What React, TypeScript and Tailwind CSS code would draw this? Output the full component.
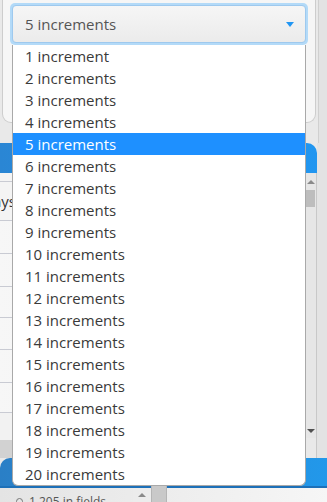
import React from "react";

const items = Array.from({ length: 20 }, (_, i) =>
  i === 0 ? "1 increment" : `${i + 1} increments`
);

export default function App() {
  const font = { fontFamily: '"Open Sans", "Noto Sans", sans-serif' };
  return (
    <div
      className="relative w-[327px] h-[502px] overflow-hidden bg-[#e9e9e9] flex flex-col"
      style={font}
    >
      {/* top panel row */}
      <div className="flex h-[143px] shrink-0">
        <div className="ml-[2px] w-[314px] h-[123px] bg-[#f6f6f6] border border-t-0 border-[#cdcdcd] rounded-b-[9px]" />
        <div className="flex-1 ml-[2px] bg-[#e3e3e3] border-l border-[#d0d0d0]" />
      </div>
      {/* blue header */}
      <div className="flex h-[30px] shrink-0">
        <div className="w-[317px] bg-gradient-to-r from-[#2a86d4] to-[#2196f0] rounded-tr-[10px]" />
        <div className="flex-1 bg-[#e3e3e3]" />
      </div>
      {/* table area */}
      <div className="flex h-[285px] shrink-0">
        <div className="w-[305px] flex flex-col bg-[#f4f4f4]">
          <div className="h-[9px] border-b border-[#c9cbd3]" />
          <div className="h-[39px] border-b border-[#c9cbd3] flex items-center text-[15px] text-[#333]">
            <span className="ml-[-18px]">Days</span>
          </div>
          {[33, 33, 31, 32, 33, 30].map((h, i) => (
            <div
              key={i}
              className="border-b border-[#c9cbd3] bg-gradient-to-r from-[#f7f7f7] to-[#ececec]"
              style={{ height: h }}
            />
          ))}
          <div className="h-[27px] bg-[#f2f2f2]" />
          <div className="flex-1 bg-[#d2d2d2]" />
        </div>
        <div className="w-[11px] flex flex-col bg-[#e6e6e6] h-[265px]">
          <div className="h-[17px] flex items-center justify-center">
            <div className="w-0 h-0 border-l-[4px] border-r-[4px] border-b-[4px] border-l-transparent border-r-transparent border-b-[#8a8a8a]" />
          </div>
          <div className="h-[17px] mx-[1px] bg-[#bdbdbd]" />
          <div className="flex-1" />
          <div className="h-[14px] flex items-center justify-center">
            <div className="w-0 h-0 border-l-[4px] border-r-[4px] border-t-[4px] border-l-transparent border-r-transparent border-t-[#505050]" />
          </div>
        </div>
        <div className="flex-1 bg-[#e3e3e3] border-l border-[#c8c8c8]" />
      </div>
      {/* bottom blue bar */}
      <div className="h-[30px] shrink-0 bg-gradient-to-r from-[#2a7fc6] to-[#2298ea] rounded-tl-[10px] border-b-[2px] border-[#1d70b8]" />
      {/* bottom area */}
      <div className="flex-1 flex bg-gradient-to-r from-[#e4e4e4] to-[#f6f6f6] relative">
        <div className="flex items-start pt-[8px] pl-[16px] gap-[6px] w-[133px] text-[12px] text-[#555] leading-none">
          <span className="w-[7px] h-[7px] mt-[2px] rounded-full border border-[#777] shrink-0" />
          <span>1 205 in fields</span>
        </div>
        <div className="w-[18px] flex justify-center pt-[5px] bg-[#ececec]">
          <div className="w-0 h-0 border-l-[4px] border-r-[4px] border-b-[4px] border-l-transparent border-r-transparent border-b-[#8a8a8a]" />
        </div>
        <div className="w-[16px] mt-[-5px] bg-[#c9c9c9] border-x border-[#b5b5b5]" />
      </div>

      {/* select */}
      <div className="absolute left-[10px] top-[3px] w-[298px] h-[42px] rounded-[5px] bg-[#b3daf8] p-[2px]">
        <div className="w-full h-full rounded-[4px] border border-[#9ec9ee] bg-gradient-to-b from-[#f6f6f6] to-[#ebebeb] flex items-center pl-[12px] pr-[11px]">
          <span className="flex-1 text-[15px] text-[#555]">5 increments</span>
          <div className="w-0 h-0 border-l-[4px] border-r-[4px] border-t-[5px] border-l-transparent border-r-transparent border-t-[#2196f3]" />
        </div>
      </div>

      {/* dropdown list */}
      <div className="absolute left-[12px] top-[45px] w-[294px] h-[441px] bg-white border border-[#a9a9a9] border-t-0 rounded-b-[6px] overflow-hidden">
        {items.map((t, i) => (
          <div
            key={t}
            className={
              "h-[22px] flex items-center pl-[12px] text-[15px] " +
              (i === 4 ? "bg-[#1e90ff] text-white" : "text-[#3a3a3a]")
            }
          >
            {t}
          </div>
        ))}
      </div>
    </div>
  );
}
